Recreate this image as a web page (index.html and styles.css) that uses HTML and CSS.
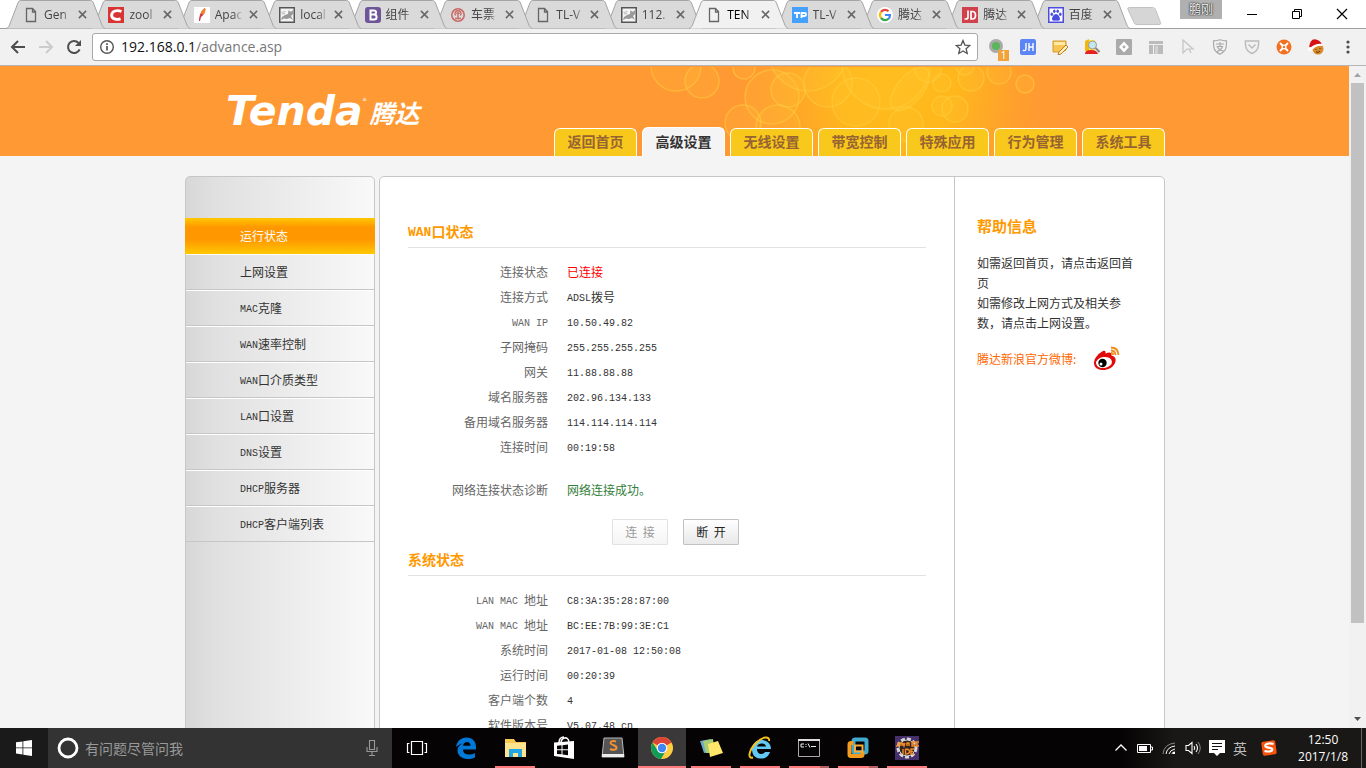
FILE: index.html
```html
<!DOCTYPE html>
<html lang="zh-CN">
<head>
<meta charset="utf-8">
<title>TENDA</title>
<link rel="stylesheet" href="styles.css">
</head>
<body>
<svg class="defs" aria-hidden="true">
  <symbol id="shape" viewBox="0 0 100 29" preserveAspectRatio="none"><path d="M0 28.5C2 28 2.500 27 3.500 25L12 3C13 1 13.500 .5 15 .5H85C86.500 .5 87 1 88 3L96.500 25C97.500 27 98 28 100 28.500"/></symbol>
  <symbol id="doc" viewBox="0 0 16 16"><path d="M3.500 1.500h6l3 3v10h-9zM9.500 1.500v3.500h3.500" fill="none" stroke="#666" stroke-width="1.300"/></symbol>
  <symbol id="cat" viewBox="0 0 16 16"><path d="M.75 .75h14.500v14.500H.75z" fill="#f4f4f4" stroke="#555" stroke-width="1.500"/><path d="M2 13l1-3 3-2 3-1 .5-4 1.500 1.500h1.500L14 3v4l-2 2 2 4-3-2-3 1-3-.5z" fill="#999"/><path d="M2.500 5.500l4-1M3 7l3-.5" stroke="#bbb"/></symbol>
  <symbol id="x" viewBox="0 0 10 10"><path d="M1 1l8 8M9 1L1 9" stroke="#666" stroke-width="1.700" fill="none"/></symbol>
</svg>

<header class="browser">
  <div class="tabbar">
    <div class="tabs">
      <div class="tab t1"><svg class="shape"><use href="#shape"/></svg><svg class="fav"><use href="#doc"/></svg><button class="name">Gen</button><button class="close" aria-label="关闭"><svg><use href="#x"/></svg></button></div>
      <div class="tab t2"><svg class="shape"><use href="#shape"/></svg><svg class="fav" viewBox="0 0 16 16"><path d="M0 0h16v16H0z" fill="#d93434"/><path d="M13.500 4.500C9 2.500 4 4 3.600 8c-.2 4 5 5 9 3.800" fill="none" stroke="#fff" stroke-width="2.800"/></svg><button class="name">zool</button><button class="close" aria-label="关闭"><svg><use href="#x"/></svg></button></div>
      <div class="tab t3"><svg class="shape"><use href="#shape"/></svg><svg class="fav" viewBox="0 0 16 16"><path d="M0 0h16v16H0z" fill="#fff"/><path d="M11 1c1 3-1 7-4 9l-1 4-1 0C5 9 7 3 11 1z" fill="#d4314d"/><path d="M11 1c1 3 0 5-2 7L7 6c1-2 2-4 4-5z" fill="#f28a24"/></svg><button class="name">Apac</button><button class="close" aria-label="关闭"><svg><use href="#x"/></svg></button></div>
      <div class="tab t4"><svg class="shape"><use href="#shape"/></svg><svg class="fav"><use href="#cat"/></svg><button class="name">local</button><button class="close" aria-label="关闭"><svg><use href="#x"/></svg></button></div>
      <div class="tab t5"><svg class="shape"><use href="#shape"/></svg><svg class="fav" viewBox="0 0 16 16"><rect width="16" height="16" rx="3" fill="#6f5499"/><path d="M5.500 3.500h3.300c3 0 3 4 0 4H5.500zM5.500 7.500h3.600c3.300 0 3.300 5 0 5H5.500z" fill="none" stroke="#fff" stroke-width="2"/></svg><button class="name">组件</button><button class="close" aria-label="关闭"><svg><use href="#x"/></svg></button></div>
      <div class="tab t6"><svg class="shape"><use href="#shape"/></svg><svg class="fav" viewBox="0 0 16 16"><circle cx="8" cy="8" r="6.200" fill="none" stroke="#c96a66" stroke-width="1.600"/><path d="M5 11.500h6M8 7v4.500M5.500 8.500C4 5 6 3.800 8 3.800s4 1.200 2.500 4.700M6.800 7a1.200 1.200 0 112.400 0" fill="none" stroke="#c96a66" stroke-width="1.400"/></svg><button class="name">车票</button><button class="close" aria-label="关闭"><svg><use href="#x"/></svg></button></div>
      <div class="tab t7"><svg class="shape"><use href="#shape"/></svg><svg class="fav"><use href="#doc"/></svg><button class="name">TL-V</button><button class="close" aria-label="关闭"><svg><use href="#x"/></svg></button></div>
      <div class="tab t8"><svg class="shape"><use href="#shape"/></svg><svg class="fav"><use href="#cat"/></svg><button class="name">112.</button><button class="close" aria-label="关闭"><svg><use href="#x"/></svg></button></div>
      <div class="tab active"><svg class="shape"><use href="#shape"/></svg><svg class="fav"><use href="#doc"/></svg><button class="name">TEN</button><button class="close" aria-label="关闭"><svg><use href="#x"/></svg></button></div>
      <div class="tab t10"><svg class="shape"><use href="#shape"/></svg><svg class="fav" viewBox="0 0 16 16"><path d="M0 0h16v16H0z" fill="#45a1ff"/><path d="M2 6h6M5 6v5M9.500 11V6h3.200c1.800 0 1.800 3 0 3H10" fill="none" stroke="#fff" stroke-width="1.800"/></svg><button class="name">TL-V</button><button class="close" aria-label="关闭"><svg><use href="#x"/></svg></button></div>
      <div class="tab t11"><svg class="shape"><use href="#shape"/></svg><svg class="fav" viewBox="0 0 16 16"><circle cx="8" cy="8" r="8" fill="#fff"/><g fill="none" stroke-width="2.200"><path d="M4 5a5 5 0 017.500-.7" stroke="#ea4335"/><path d="M4 11a5 5 0 010-6" stroke="#fbbc05"/><path d="M11.500 11.700A5 5 0 014 11" stroke="#34a853"/><path d="M8 8h5c0 1.600-.5 2.800-1.500 3.700" stroke="#4285f4"/></g></svg><button class="name">腾达</button><button class="close" aria-label="关闭"><svg><use href="#x"/></svg></button></div>
      <div class="tab t12"><svg class="shape"><use href="#shape"/></svg><svg class="fav" viewBox="0 0 16 16"><path d="M0 0h16v16H0z" fill="#d0414b"/><path d="M6 3.500v6.500q0 2-2 2H2.500M9 4.500h1.500c4 0 4 7.500 0 7.500H9z" fill="none" stroke="#fff" stroke-width="1.700"/></svg><button class="name">腾达</button><button class="close" aria-label="关闭"><svg><use href="#x"/></svg></button></div>
      <div class="tab t13"><svg class="shape"><use href="#shape"/></svg><svg class="fav" viewBox="0 0 16 16"><path d="M.75 .75h14.500v14.500H.75z" fill="#fff" stroke="#4a4ee0" stroke-width="1.500"/><g fill="#4a4ee0"><ellipse cx="3.800" cy="7.200" rx="1.300" ry="1.800"/><ellipse cx="6.300" cy="4.300" rx="1.300" ry="1.800"/><ellipse cx="9.700" cy="4.300" rx="1.300" ry="1.800"/><ellipse cx="12.300" cy="7.200" rx="1.300" ry="1.800"/><path d="M8 7c2 0 4 3 4 5s-2 1.800-4 1.500c-2 .3-4 .5-4-1.500s2-5 4-5z"/></g></svg><button class="name">百度</button><button class="close" aria-label="关闭"><svg><use href="#x"/></svg></button></div>
    </div>
    <button class="newtab" aria-label="新标签页"><svg viewBox="0 0 35 18"><path d="M2.500 .5h23c2 0 2.500 1 3 2l5 13c.5 1.500 0 2-1.500 2H10c-2 0-2.500-1-3-2L1 2.500C.5 1 1 .5 2.500 .5z" fill="#d6d6d6" stroke="#c2c2c2"/></svg></button>
    <div class="wincontrols">
      <button class="profile">鹏刚</button>
      <button class="win" aria-label="最小化"><svg viewBox="0 0 12 12"><path d="M1 6.500h10" stroke="#000"/></svg></button>
      <button class="win" aria-label="还原"><svg viewBox="0 0 12 12"><path d="M1.500 3.500h7v7h-7zM3.500 3.500v-2h7v7h-2" fill="none" stroke="#000"/></svg></button>
      <button class="win" aria-label="关闭窗口"><svg viewBox="0 0 12 12"><path d="M1 1l10 10M11 1L1 11" stroke="#000" stroke-width="1.200"/></svg></button>
    </div>
  </div>
  <div class="toolbar">
    <div class="navbtns">
      <button aria-label="后退"><svg viewBox="0 0 16 16"><path d="M15 8H2M8 2L2 8l6 6" fill="none" stroke="#4d4d4d" stroke-width="2"/></svg></button>
      <button aria-label="前进"><svg viewBox="0 0 16 16"><path d="M1 8h13M8 2l6 6-6 6" fill="none" stroke="#ccc" stroke-width="2"/></svg></button>
      <button aria-label="刷新"><svg viewBox="0 0 16 16"><path d="M13.600 10.300A6 6 0 1112.500 4" fill="none" stroke="#4d4d4d" stroke-width="2"/><path d="M15 1v6H9z" fill="#4d4d4d"/></svg></button>
    </div>
    <div class="omnibox">
      <svg class="info" viewBox="0 0 16 16"><circle cx="8" cy="8" r="6.300" fill="none" stroke="#555" stroke-width="1.400"/><path d="M8 7v4.500M8 4.300v1.600" stroke="#555" stroke-width="1.700"/></svg>
      <div class="url" role="textbox" aria-label="地址">192.168.0.1<span>/advance.asp</span></div>
      <button aria-label="收藏"><svg viewBox="0 0 16 16"><path d="M8 1.500l1.900 4.600 4.900.4-3.700 3.200 1.100 4.800L8 11.900l-4.200 2.600 1.100-4.800L1.200 6.500l4.900-.4z" fill="none" stroke="#555" stroke-width="1.300"/></svg></button>
    </div>
    <div class="exts">
      <button aria-label="扩展 1"><svg viewBox="0 0 16 16"><circle cx="8" cy="7" r="5.500" fill="#5bb55b" stroke="#aaa" stroke-width="3"/></svg><span class="badge">1</span></button>
      <button aria-label="JH"><svg viewBox="0 0 16 16"><rect width="16" height="16" rx="2" fill="#5b84f5"/><path d="M6 4v5.500Q6 12 3.500 11.500L3 11M9 4v8M13 4v8M9 8h4" fill="none" stroke="#fff" stroke-width="1.400"/></svg></button>
      <button aria-label="便签"><svg viewBox="0 0 16 16"><path d="M1 2h13v9l-4 2H1z" fill="#f6c453" stroke="#d99b2c"/><path d="M2 3h11v3H2z" fill="#fde9a8"/><path d="M14 6l2 2-7 7-3 1 1-3z" fill="#fff0bd" stroke="#c27b23"/></svg></button>
      <button aria-label="查找"><svg viewBox="0 0 16 16"><path d="M1 2l4-2v12H1z" fill="#f2b90c"/><path d="M5 1h6v11H5z" fill="#ffe14d"/><path d="M1 15q0-4 6-4t7 4z" fill="#e52222"/><circle cx="8.500" cy="6" r="4" fill="#c7e7ef" stroke="#999"/><path d="M11.500 9l4 4" stroke="#888" stroke-width="2"/></svg></button>
      <button aria-label="扩展 5"><svg viewBox="0 0 16 16"><rect width="16" height="16" rx="1" fill="#aaa"/><path d="M8 2.500L13 8l-5 5.500L3 8z" fill="#fff"/><circle cx="8" cy="8" r="1.400" fill="#aaa"/></svg></button>
      <button aria-label="布局"><svg viewBox="0 0 16 16"><path d="M1 2h14v3H1zM1 6h4v9H1zM6 6h9v9H6z" fill="#bbb"/><path d="M7 7h3v8H7z" fill="#d2d2d2"/></svg></button>
      <button aria-label="指针"><svg viewBox="0 0 16 16"><path d="M3 1l10 9H7l-4 4zM9 10l2 4" fill="none" stroke="#c4c4c4" stroke-width="1.200"/></svg></button>
      <button aria-label="支付"><svg viewBox="0 0 16 16"><path d="M8 .8c3 1 4 1 6.500 1 0 7 0 10-6.500 13.400C1.500 12 1.500 8.800 1.500 1.800 4 1.800 5 1.800 8 .8zM4 5h8M8 3v4M4.500 7.500h6q-1 3.500-5.500 5M5.500 8q2 3.500 6 4" fill="none" stroke="#aaa" stroke-width="1.200"/></svg></button>
      <button aria-label="收藏夹"><svg viewBox="0 0 16 16"><path d="M1.500 2h13v4Q14 12 8 14.500 2 12 1.500 6zM4.500 5.500L8 9l3.500-3.500" fill="none" stroke="#bbb" stroke-width="1.500"/></svg></button>
      <button aria-label="扩展 10"><svg viewBox="0 0 16 16"><circle cx="8" cy="8" r="7.500" fill="#f37021"/><path d="M4 4l3 3M12 4L9 7M4 12l3-3M12 12L9 9" stroke="#fff" stroke-width="1.800"/><circle cx="8" cy="8" r="2.500" fill="#fff"/><circle cx="8" cy="8" r="1.200" fill="#f37021"/></svg></button>
      <button aria-label="圣诞"><svg viewBox="0 0 16 16"><circle cx="10" cy="10" r="5.500" fill="#d88a2c"/><path d="M1 9Q2-1 8 0.500q5 1 6 5.500-6-1-11 4z" fill="#d51515"/><path d="M2 9Q8 4 14 5l.5 2Q9 6 4 11z" fill="#fff"/><circle cx="2" cy="10" r="2" fill="#fff"/><path d="M8 10v1M12 9v1M8 13q3 1 4-1" stroke="#593100" fill="none"/></svg></button>
      <button aria-label="菜单"><svg viewBox="0 0 16 16" fill="#4d4d4d"><circle cx="8" cy="3" r="1.600"/><circle cx="8" cy="8" r="1.600"/><circle cx="8" cy="13" r="1.600"/></svg></button>
    </div>
  </div>
</header>

<div class="viewport">
  <div class="site">
    <div class="banner">
      <div class="wrap head">
        <svg class="bubbles" viewBox="0 0 410 89" aria-hidden="true">
          <defs><radialGradient id="glow"><stop offset="0" stop-color="#ffbc1c"/><stop offset=".35" stop-color="#ffb71c"/><stop offset=".6" stop-color="#ffaa26" stop-opacity=".85"/><stop offset="1" stop-color="#ff9933" stop-opacity="0"/></radialGradient></defs>
          <ellipse cx="246" cy="20" rx="168" ry="170" fill="url(#glow)"/>
          <g fill="#ffd23c" fill-opacity=".13" stroke="#ffd040" stroke-opacity=".5" stroke-width="1.500">
            <circle cx="26" cy="-1" r="25"/><circle cx="52" cy="14" r="17"/><circle cx="94" cy="1" r="11"/><circle cx="122" cy="30" r="27"/><circle cx="138" cy="23" r="17"/><circle cx="158" cy="-15" r="39"/><circle cx="93" cy="56" r="18"/><circle cx="128" cy="60" r="22"/><circle cx="206" cy="35" r="24"/><circle cx="178" cy="16" r="24"/><circle cx="236" cy="-2" r="44"/><circle cx="256" cy="57" r="17"/><ellipse cx="260" cy="22" rx="13" ry="26" transform="rotate(40 260 22)"/><circle cx="278" cy="2" r="13"/><circle cx="292" cy="16" r="9"/><circle cx="315" cy="-1" r="9"/><circle cx="321" cy="11" r="13"/><circle cx="349" cy="5" r="12"/><circle cx="375" cy="17" r="9"/><circle cx="292" cy="39" r="10"/><circle cx="305" cy="42" r="13"/>
          </g>
        </svg>
        <a class="logo" href="#"><span class="word">Tenda</span><sup>®</sup><span class="han">腾达</span></a>
        <nav class="mainnav">
          <a href="#">返回首页</a><a href="#" class="on">高级设置</a><a href="#">无线设置</a><a href="#">带宽控制</a><a href="#">特殊应用</a><a href="#">行为管理</a><a href="#">系统工具</a>
        </nav>
      </div>
    </div>
    <div class="wrap columns">
      <nav class="side">
        <a href="#" class="on">运行状态</a>
        <a href="#">上网设置</a>
        <a href="#"><span class="lat">MAC</span>克隆</a>
        <a href="#"><span class="lat">WAN</span>速率控制</a>
        <a href="#"><span class="lat">WAN</span>口介质类型</a>
        <a href="#"><span class="lat">LAN</span>口设置</a>
        <a href="#"><span class="lat">DNS</span>设置</a>
        <a href="#"><span class="lat">DHCP</span>服务器</a>
        <a href="#"><span class="lat">DHCP</span>客户端列表</a>
      </nav>
      <div class="panel">
        <main class="status">
          <h2><span class="lat">WAN</span>口状态</h2>
          <table>
            <tr><th scope="row">连接状态</th><td class="red">已连接</td></tr>
            <tr><th scope="row">连接方式</th><td><span class="lat">ADSL</span>拨号</td></tr>
            <tr><th scope="row"><span class="lat">WAN IP</span></th><td><span class="lat">10.50.49.82</span></td></tr>
            <tr><th scope="row">子网掩码</th><td><span class="lat">255.255.255.255</span></td></tr>
            <tr><th scope="row">网关</th><td><span class="lat">11.88.88.88</span></td></tr>
            <tr><th scope="row">域名服务器</th><td><span class="lat">202.96.134.133</span></td></tr>
            <tr><th scope="row">备用域名服务器</th><td><span class="lat">114.114.114.114</span></td></tr>
            <tr><th scope="row">连接时间</th><td><span class="lat">00:19:58</span></td></tr>
          </table>
          <table class="diag">
            <tr><th scope="row">网络连接状态诊断</th><td class="green">网络连接成功。</td></tr>
          </table>
          <div class="actions"><button disabled>连&nbsp; 接</button><button>断&nbsp; 开</button></div>
          <h2>系统状态</h2>
          <table>
            <tr><th scope="row"><span class="lat">LAN MAC </span>地址</th><td><span class="lat">C8:3A:35:28:87:00</span></td></tr>
            <tr><th scope="row"><span class="lat">WAN MAC </span>地址</th><td><span class="lat">BC:EE:7B:99:3E:C1</span></td></tr>
            <tr><th scope="row">系统时间</th><td><span class="lat">2017-01-08 12:50:08</span></td></tr>
            <tr><th scope="row">运行时间</th><td><span class="lat">00:20:39</span></td></tr>
            <tr><th scope="row">客户端个数</th><td><span class="lat">4</span></td></tr>
            <tr><th scope="row">软件版本号</th><td><span class="lat">V5.07.48_cn</span></td></tr>
          </table>
        </main>
        <aside class="help">
          <h3>帮助信息</h3>
          <p>如需返回首页，请点击返回首页</p>
          <p>如需修改上网方式及相关参数，请点击上网设置。</p>
          <a class="weibo" href="#">腾达新浪官方微博:<svg viewBox="0 0 27 25"><path d="M1 17c0-5 5-10 9-12 2-.8 3 0 2.500 2.500C16 6 19 6 18.500 9.500c4 1 5 4 3.500 7.500-2 4.500-7 7-12 7S1 21.500 1 17z" fill="#e10a0a"/><ellipse cx="11" cy="16.500" rx="8" ry="5.500" fill="#fff" transform="rotate(-8 11 16.500)"/><circle cx="9.500" cy="17" r="4.200" fill="#000"/><circle cx="8" cy="18" r="1.500" fill="#fff"/><path d="M18 1.500q7 0 7.500 7.500M18 4.500q4 0 4.500 4.500M18 7q2 0 2 2" fill="none" stroke="#f08a1d" stroke-width="1.800"/></svg></a>
        </aside>
      </div>
    </div>
  </div>
  <div class="scroll" aria-hidden="true">
    <svg viewBox="0 0 17 17"><path d="M5 11h7L8.500 7z" fill="#a3a3a3"/></svg>
    <div class="track"><div class="thumb"></div></div>
    <svg viewBox="0 0 17 17"><path d="M5 6h7l-3.500 4z" fill="#505050"/></svg>
  </div>
</div>

<footer class="taskbar">
  <button class="start" aria-label="开始"><svg viewBox="0 0 16 16" fill="#fff"><path d="M0 2.300l6.500-.9v6.100H0zM7.300 1.300L16 0v7.500H7.300zM0 8.300h6.500v6.200L0 13.600zM7.300 8.300H16V16l-8.700-1.300z"/></svg></button>
  <div class="search">
    <svg class="cortana" viewBox="0 0 22 22"><circle cx="11" cy="11" r="9" fill="none" stroke="#fff" stroke-width="2.800"/></svg>
    <input type="text" aria-label="搜索" placeholder="有问题尽管问我">
    <svg class="mic" viewBox="0 0 12 18"><path d="M3.500 1.500h5v9h-5zM1 8v4.500h10V8M6 13v3.500M3 16.500h6" fill="none" stroke="#999" stroke-width="1.100"/></svg>
  </div>
  <div class="apps">
    <button aria-label="任务视图"><svg viewBox="0 0 24 24"><path d="M6.500 5.500h11v13h-11zM4.500 7.500h-2v9h2M19.500 7.500h2v9h-2" fill="none" stroke="#fff" stroke-width="1.200"/></svg></button>
    <button aria-label="Edge"><svg viewBox="0 0 24 24"><path d="M2 11C3 5 7 1.500 12.500 1.500c6 0 9.500 4 9.500 9.500v2.500H9c0 6 8 6 12 3.500v4.500C11 25.500 3 21 3.500 14c.2-3 2-5 5-6.500C6 8 3.500 9.500 2 11zM9 9.800h7.500C16.500 4.500 9.500 5 9 9.800z" fill="#0078d7" fill-rule="evenodd"/></svg></button>
    <button aria-label="资源管理器" class="run"><svg viewBox="0 0 24 24"><path d="M2 3h9l2 3h10v15H2z" fill="#f5c952"/><path d="M2 7h21v14H2z" fill="#ffe490"/><path d="M6 21v-8h13v8h-4v-4h-5v4z" fill="#22a5e5"/></svg></button>
    <button aria-label="应用商店"><svg viewBox="0 0 24 24"><path d="M2 6.500L22 5v18L2 20z" fill="#fff"/><path d="M7 7c0-5 3-6 5-6M9 7c0-5 7-8 8-1" fill="none" stroke="#fff" stroke-width="1.500"/><path d="M5 9.800l4.500-.5v4H5zM10.500 9.200L16 8.500v4.800h-5.500zM5 14.300h4.500v4L5 18zM10.500 14.300H16v4.900l-5.500-.8z" fill="#080606"/></svg></button>
    <button aria-label="Sublime"><svg viewBox="0 0 24 24"><path d="M3 2h18l2 19H1z" fill="#555" stroke="#bbb"/><path d="M1 18h22v3H1z" fill="#eee"/><path d="M15 5.500C12 4.500 9.500 5 9.500 7s6 2 6 4.500-3.500 3-6.500 1.500" fill="none" stroke="#f29135" stroke-width="2"/></svg></button>
    <button aria-label="Chrome" class="run current"><svg viewBox="0 0 24 24"><circle cx="12" cy="12" r="11" fill="#ffcd40"/><path d="M12 12L2.500 6.500A11 11 0 0121.500 6.500z" fill="#db4437"/><path d="M2.500 6.500A11 11 0 0011 23l5-8.500-8.200.1z" fill="#0f9d58"/><path d="M12 6.500h9.500" stroke="#db4437" stroke-width="1"/><circle cx="12" cy="12" r="5.300" fill="#fff"/><circle cx="12" cy="12" r="4.200" fill="#4285f4"/></svg></button>
    <button aria-label="便笺" class="run"><svg viewBox="0 0 24 24"><path d="M1 5l11-2 2 13-9 1z" fill="#6ba7cf"/><path d="M4 5l10-2 2 14H7z" fill="#a9ce72"/><path d="M9 8l10-3 5 12-13 4z" fill="#ffe76b"/></svg></button>
    <button aria-label="IE" class="run"><svg viewBox="0 0 24 24"><path d="M23 13H9c0 6 6 6 8 3h5c-2 6-7 7-10 6.500C6 22 4 18 4 13S8 4 13 4s10 3 10 9zM9 10.500h9c-.5-4-8-4-9 0z" fill="#62c8f4" fill-rule="evenodd"/><path d="M21 5C22 0 15 0 8 7 1 14-1 23 5 21.500" fill="none" stroke="#f5c021" stroke-width="2"/></svg></button>
    <button aria-label="命令提示符" class="run multi"><svg viewBox="0 0 24 24"><path d="M1.500 3.500h21v17h-21z" fill="#050505" stroke="#aaa"/><path d="M1 3h22v2H1z" fill="#ddd"/><path d="M7 8H4v3h3M9 8v1M9 10v1M11 7.500l2 4M14 10.500h5" fill="none" stroke="#eee"/></svg></button>
    <button aria-label="VMware" class="run multi"><svg viewBox="0 0 24 24"><rect x="7.500" y="3.500" width="13" height="13" rx="1.500" fill="none" stroke="#3fabd0" stroke-width="4"/><path d="M7.500 7H5q-1.500 0-1.500 1.500v10Q3.500 20 5 20h10q1.500 0 1.500-1.500V16" fill="none" stroke="#f49b20" stroke-width="4"/><path d="M9 9.500h7.500v6H9z" fill="none" stroke="#f7ae3c" stroke-width="2"/></svg></button>
    <button aria-label="Java EE IDE" class="run"><svg viewBox="0 0 24 24"><path d="M0 0h24v24H0z" fill="#46306b"/><circle cx="12" cy="12" r="9" fill="#261b32" stroke="#d8d8d8" stroke-width="3" stroke-dasharray="4 2"/><circle cx="12" cy="12" r="8" fill="#33231f" stroke="#d8d8d8"/><path d="M3 6v4H1M5 10V7h2v3M8 7l1 3 1-3M12 10V7h2v3M20 6h-3v4h3M17 8h2M24 6h-3v4h3M21 8h2M8 13v5M10.500 13v5q4 0 4-2.500T10.500 13M19 13h-3v5h3M16 15.500h2" fill="none" stroke="#f28c28" stroke-width="1.400"/></svg></button>
  </div>
  <div class="tray">
    <svg viewBox="0 0 16 16"><path d="M2.500 10.500L8 5l5.500 5.500" fill="none" stroke="#fff" stroke-width="1.300"/></svg>
    <svg viewBox="0 0 16 16"><path d="M.5 4.500h13v8H.5zM14 7h1.500v3H14" fill="none" stroke="#fff"/><path d="M2 6h8v5H2z" fill="#fff"/></svg>
    <svg viewBox="0 0 16 16"><g fill="none" stroke="#fff"><path d="M2 14Q3 4 14 3" stroke="#888"/><path d="M5 14q1-7 9-8M8 14q1-4 6-5"/><path d="M11 14q0-2 3-2"/></g><path d="M12 12h2v2h-2z" fill="#fff"/></svg>
    <svg viewBox="0 0 16 16"><path d="M1 5.500h2.500l3.500-3v11l-3.500-3H1zM9 6q1.500 2 0 4M11 4q3 4 0 8" fill="none" stroke="#fff" stroke-width="1.100"/><path d="M13 2q4.500 6 0 12" fill="none" stroke="#888"/></svg>
    <svg viewBox="0 0 16 16"><path d="M0 0h16v13h-5l-3 3-3-3H0z" fill="#fff"/><path d="M3 3.500h10M3 6.500h10M3 9.500h6" stroke="#111"/></svg>
    <span class="ime">英</span>
    <svg viewBox="0 0 16 16"><rect x="1" y="1" width="14" height="14" rx="2" fill="#f9520d" transform="rotate(-8 8 8)"/><path d="M12.500 4C8 2.500 4 4 4.300 6c.4 2.300 7 1 7 3.500 0 2-4 2.500-7.800 1.500" fill="none" stroke="#fff" stroke-width="2.200"/></svg>
  </div>
  <div class="clock"><span>12:50</span><span>2017/1/8</span></div>
  <button class="peek" aria-label="显示桌面"></button>
</footer>
</body>
</html>
```
FILE: styles.css
```css
* { box-sizing: border-box; }
body {
  margin: 0;
  height: 100vh;
  display: flex;
  flex-direction: column;
  overflow: hidden;
  background: #f4f4f4;
  font: 12px/20px "Noto Sans CJK SC", sans-serif;
  color: #333;
}
button { border: 0; padding: 0; background: none; font: inherit; color: inherit; }
a { color: inherit; text-decoration: none; }
svg { display: block; flex: none; }
.defs { position: absolute; width: 0; height: 0; }

/* Browser frame */
.browser { flex: none; background: #fff; font-family: "Open Sans", "Noto Sans CJK SC", sans-serif; }
.tabbar { display: flex; height: 29px; border-bottom: 1px solid #a0a0a0; }
.tabs { display: flex; flex: 0 1 1110px; margin-left: 6px; height: 29px; isolation: isolate; }
.tab { position: relative; flex: 1 1 0; min-width: 0; display: flex; align-items: center; padding-left: 17px; }
.shape { position: absolute; left: 0; top: 0; width: calc(100% + 14px); height: 29px; fill: #dadada; stroke: #a5a5a5; }
.fav { position: relative; width: 16px; height: 16px; }
.name {
  position: relative;
  width: 28px;
  margin-left: 5px;
  white-space: nowrap;
  text-align: left;
  color: #444;
  -webkit-mask-image: linear-gradient(90deg, #000 65%, transparent);
  mask-image: linear-gradient(90deg, #000 65%, transparent);
}
.close { position: relative; margin-left: 6px; }
.close svg { width: 9px; height: 9px; }
.t1 { z-index: 13; } .t2 { z-index: 12; } .t3 { z-index: 11; } .t4 { z-index: 10; }
.t5 { z-index: 9; } .t6 { z-index: 8; } .t7 { z-index: 7; } .t8 { z-index: 6; }
.t10 { z-index: 4; } .t11 { z-index: 3; } .t12 { z-index: 2; } .t13 { z-index: 1; }
.tab.active { z-index: 20; }
.active .shape { fill: #f1f1f1; }
.active .name { color: #000; }
.newtab { align-self: flex-start; margin: 7px 0 0 11px; }
.newtab svg { width: 35px; height: 18px; }
.wincontrols { display: flex; align-items: flex-start; margin-left: auto; margin-right: 2px; }
.profile { width: 42px; height: 19px; margin-right: 7px; background: #b0b0b0; color: #fff; line-height: 18px; text-shadow: 0 0 1px #000, 0 0 2px #000; }
.win { width: 45px; height: 27px; display: flex; align-items: center; justify-content: center; }
.win svg { width: 12px; height: 12px; }
.toolbar { display: flex; align-items: center; height: 37px; background: #f1f1f1; border-bottom: 1px solid #b6b4b6; }
.navbtns { display: flex; gap: 12px; padding: 0 10px; }
.navbtns svg { width: 16px; height: 16px; }
.omnibox { flex: 1; display: flex; align-items: center; height: 28px; border: 1px solid #a8a8a8; border-radius: 3px; background: #fff; padding: 0 6px; }
.omnibox svg { width: 16px; height: 16px; }
.url { flex: 1; margin-left: 6px; font-size: 14px; color: #111; }
.url span { color: #777; }
.exts { display: flex; padding: 0 2px; }
.exts button { position: relative; width: 32px; height: 28px; display: flex; align-items: center; justify-content: center; }
.exts svg { width: 16px; height: 16px; }
.badge { position: absolute; right: 3px; bottom: 0; width: 11px; height: 11px; background: #efa33a; color: #fff; font-size: 10px; line-height: 11px; }

/* Page */
.viewport { flex: 1; min-height: 0; display: flex; overflow: hidden; }
.site { flex: 1; min-width: 0; overflow: hidden; padding-left: 1px; background: linear-gradient(#ff9933, #ff9933) 0 0 / 100% 90px no-repeat; }
.wrap { width: 980px; max-width: 100%; margin: 0 auto; }
.banner { background: #ff9933; }
.head { position: relative; display: flex; justify-content: space-between; align-items: flex-end; height: 90px; }
.bubbles { position: absolute; left: 465px; top: 1px; width: 410px; height: 89px; }
.logo { display: flex; align-items: flex-end; align-self: center; padding-left: 41px; color: #fff; font-weight: bold; font-style: italic; }
.word { font: italic bold 41px/48px "DejaVu Sans", sans-serif; }
.logo sup { font-size: 8px; line-height: 8px; align-self: flex-start; margin-top: 10px; font-style: normal; font-weight: normal; }
.han { margin: 0 0 5px 3px; font-size: 25px; line-height: 36px; }
.mainnav { position: relative; display: flex; align-items: flex-end; gap: 5px; }
.mainnav a {
  width: 83px;
  height: 28px;
  border: 1px solid #fff;
  border-bottom: 0;
  border-radius: 6px 6px 0 0;
  background: #f9c81c;
  color: #966432;
  font-size: 14px;
  font-weight: bold;
  line-height: 25px;
  text-align: center;
}
.mainnav .on { height: 29px; background: #f4f4f4; color: #333; line-height: 26px; }
.columns { display: flex; gap: 4px; padding-top: 20px; }
.side {
  flex: 0 0 190px;
  padding-top: 41px;
  border: 1px solid #c6c6c6;
  border-radius: 5px 5px 0 0;
  background: linear-gradient(90deg, #d7d7d7, #e0e0e0 15%, #f9f9f9);
}
.side a { display: block; height: 36px; padding-left: 54px; border-top: 1px solid #fff; border-bottom: 1px solid #c6c6c6; line-height: 34px; }
.side .on { margin: 0 -1px; padding-left: 55px; border: 0; line-height: 36px; background: linear-gradient(#ffc800, #ff9800 25%, #ff9800 60%, #ffc800); color: #fff; }
.lat { font-family: "Liberation Mono", monospace; font-size: 10px; line-height: 12px; vertical-align: 1px; white-space: pre; }
.panel { flex: 1; display: flex; border: 1px solid #c6c6c6; border-radius: 5px 5px 0 0; background: #fff; }
.status { flex: 1; padding: 44px 28px 28px; }
h2 { margin: 0 0 11px; height: 27px; border-bottom: 1px solid #e2e2e2; color: #ff9900; font-size: 14px; line-height: 20px; }
h2 .lat { font-size: 13px; }
table { border-collapse: collapse; }
th, td { height: 25px; padding: 0; line-height: 20px; }
th { width: 140px; font-weight: normal; text-align: right; color: #666; }
td { padding-left: 19px; }
.red { color: #f00; }
.green { color: #33803a; }
.diag { margin-top: 18px; }
.actions { display: flex; gap: 15px; padding: 17px 0 4px 204px; }
.actions button { width: 56px; height: 26px; border: 1px solid #c2c2c2; border-radius: 1px; background: linear-gradient(#fff, #e8e8e8); color: #222; }
.actions button:disabled { border-color: #e2e2e2; background: linear-gradient(#fff, #f5f5f5); color: #999; }
.help { flex: 0 0 210px; border-left: 1px solid #c6c6c6; padding: 38px 29px 0 22px; }
h3 { margin: 0 0 16px; color: #ff9900; font-size: 15px; line-height: 22px; }
p { margin: 0; }
.weibo { display: flex; align-items: center; margin-top: 13px; color: #f60; }
.weibo svg { width: 27px; height: 25px; margin-left: 17px; }
.scroll { flex: none; width: 17px; display: flex; flex-direction: column; background: #f1f1f1; }
.scroll svg { width: 17px; height: 17px; }
.track { flex: 1; padding: 0 2px; }
.thumb { height: 86%; background: #c1c1c1; }

/* Taskbar */
.taskbar { flex: none; display: flex; height: 40px; background: linear-gradient(90deg, #050303 82%, #1a1816 86%); color: #fff; }
.start { width: 48px; display: flex; align-items: center; justify-content: center; background: #1a1a1a; }
.start svg { width: 16px; height: 16px; }
.search { flex: 0 1 344px; display: flex; align-items: center; padding: 0 14px 0 9px; background: #333; }
.cortana { width: 22px; height: 22px; }
.search input { flex: 1; min-width: 0; margin-left: 6px; border: 0; padding: 0; background: none; font: 14px/20px "Noto Sans CJK SC", sans-serif; color: #fff; }
.search input::placeholder { color: #999; }
.mic { width: 12px; height: 18px; }
.apps { display: flex; gap: 1px; padding-left: 1px; }
.apps button { width: 48px; display: flex; align-items: center; justify-content: center; }
.apps svg { width: 24px; height: 24px; }
.run { background: linear-gradient(#ff7b7b, #ff7b7b) center bottom / 40px 2px no-repeat; }
.multi { background: linear-gradient(90deg, #ff7b7b 31px, #b36060 31px) center bottom / 40px 2px no-repeat; }
.current { background: linear-gradient(#ff7b7b, #ff7b7b) center bottom / 48px 2px no-repeat #3a3838; }
.tray { display: flex; align-items: center; gap: 8px; margin-left: auto; }
.tray svg { width: 16px; height: 16px; }
.ime { width: 14px; color: #bbb; font-size: 14px; margin-right: 6px; }
.clock { display: flex; flex-direction: column; justify-content: center; align-items: center; margin: 0 13px 0 21px; font: 12px/17px "Open Sans", sans-serif; }
.peek { width: 5px; border-left: 1px solid #666; }
```
